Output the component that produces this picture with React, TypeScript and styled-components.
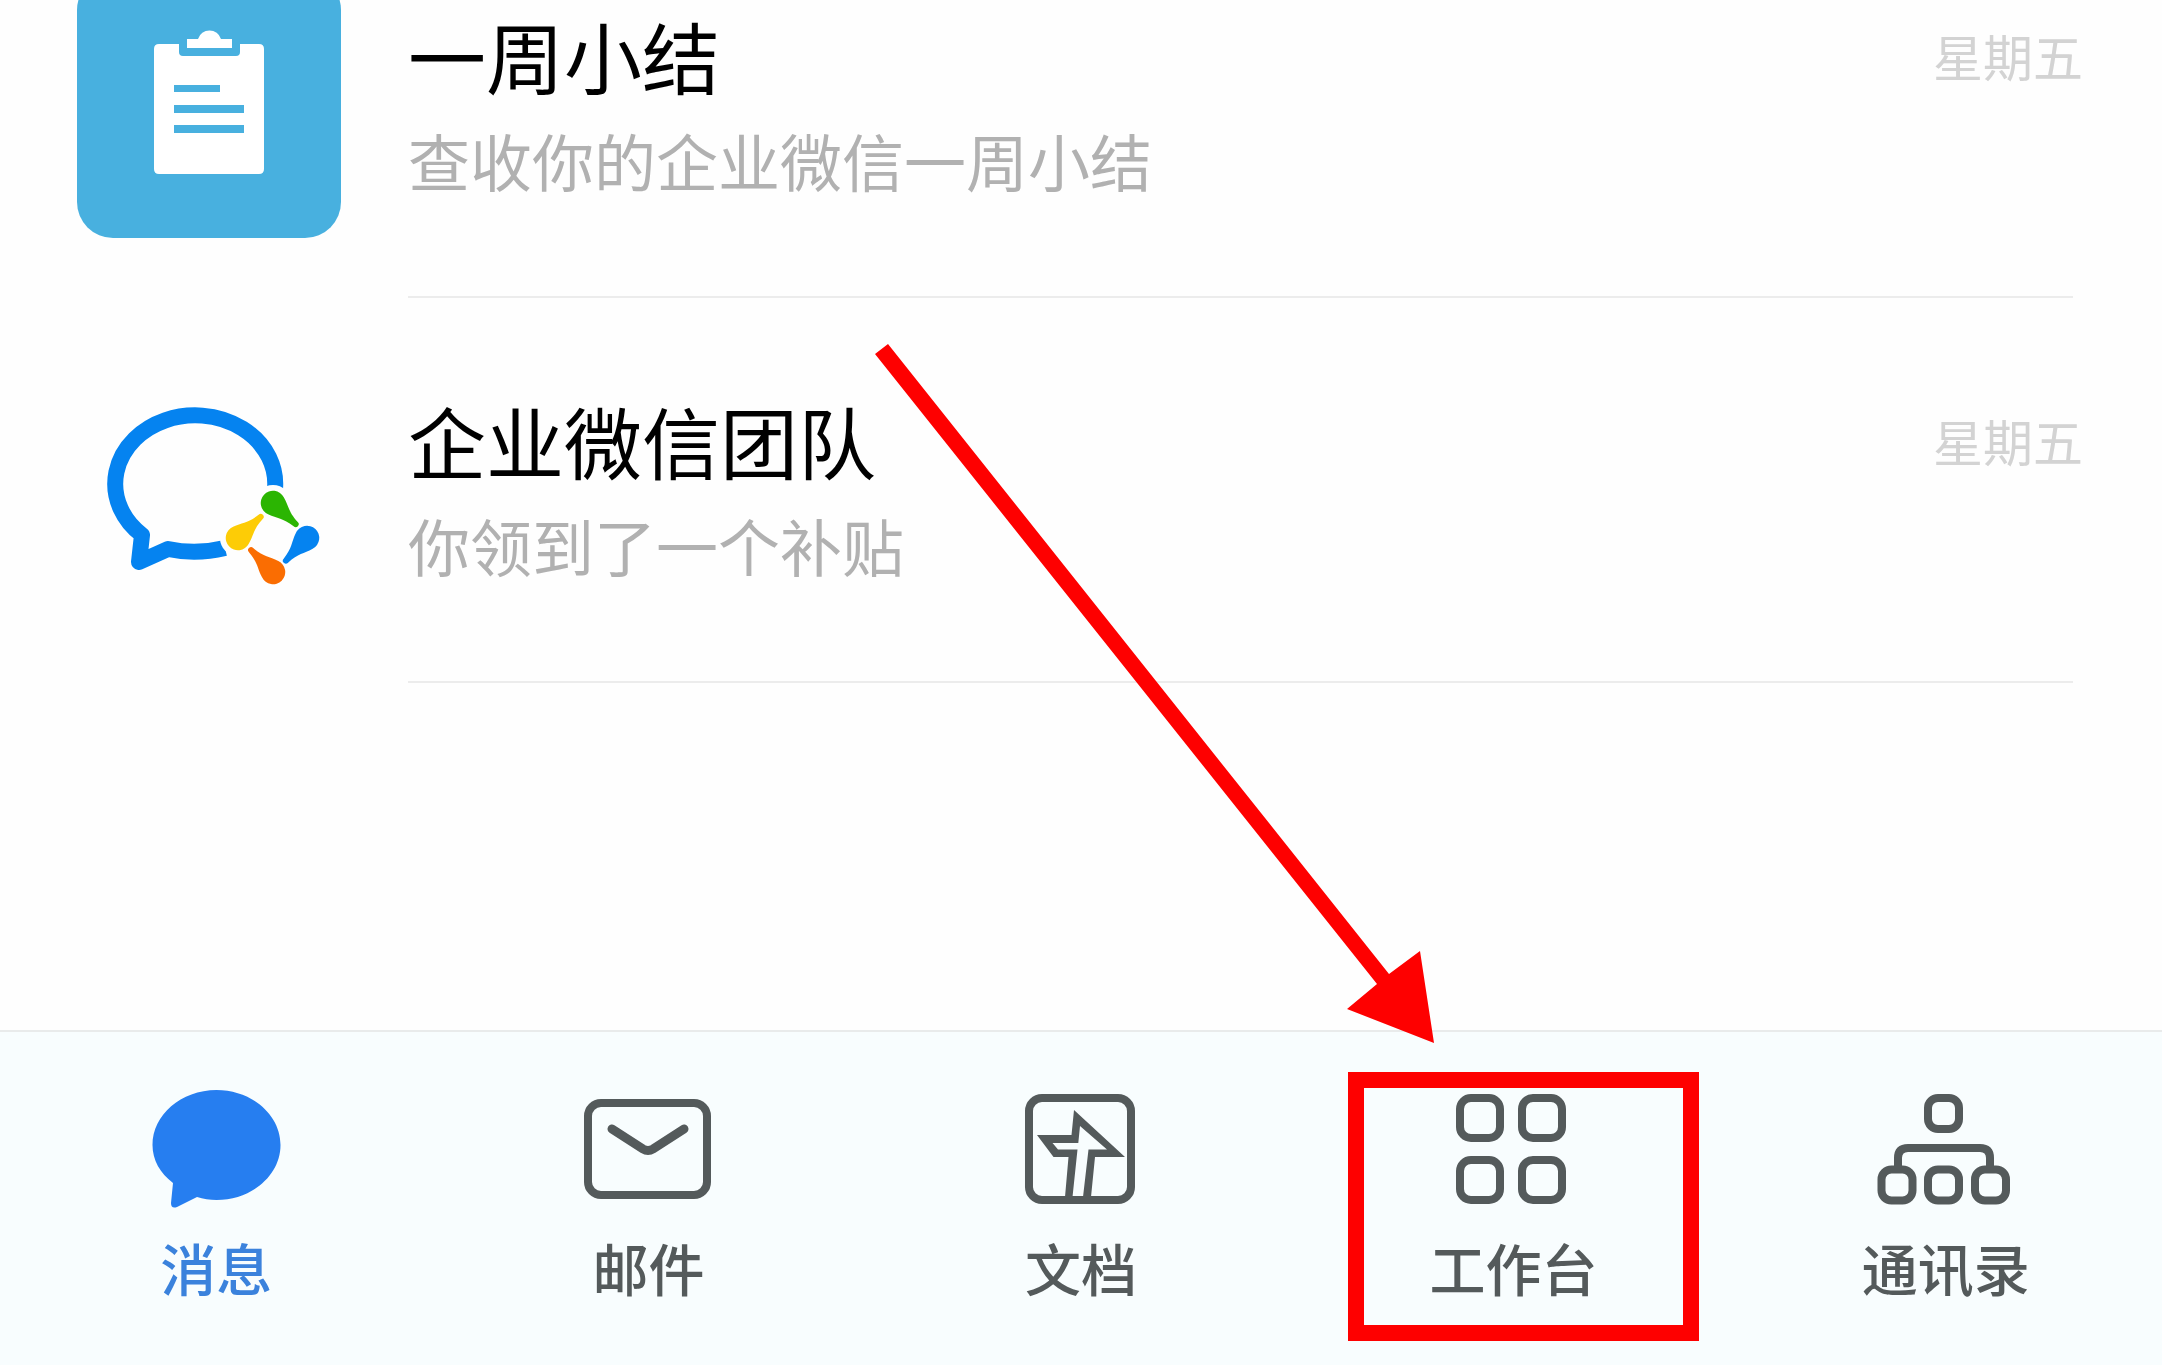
import React from "react";
import styled, { createGlobalStyle } from "styled-components";

const GlobalStyle = createGlobalStyle`
  * { box-sizing: border-box; }
  body {
    margin: 0;
    background: #fefefe;
    font-family: "Noto Sans CJK SC", "Noto Sans", sans-serif;
  }
`;

const Page = styled.div`
  position: relative;
  display: flex;
  flex-direction: column;
  min-height: 100vh;
  overflow: hidden;
`;

const Main = styled.main`
  flex: 1;
`;

/* The list is scrolled, so the first conversation is partly out of view. */
const ChatList = styled.ul`
  list-style: none;
  margin: -87px 0 0;
  padding: 0;
`;

const ChatRow = styled.li`
  display: flex;
  align-items: center;
  gap: 67px;
  height: 385px;
  padding: 0 79px 0 77px;
`;

const Avatar = styled.svg`
  flex: none;
  width: 264px;
  height: 264px;
`;

const ChatBody = styled.div`
  flex: 1;
  display: flex;
  flex-direction: column;
  align-self: stretch;
`;

const ChatContent = styled.div`
  flex: 1;
  display: flex;
  flex-direction: column;
  justify-content: center;
  padding-bottom: 6px;
`;

const ChatHead = styled.div`
  display: flex;
  align-items: center;
  justify-content: space-between;
`;

const Title = styled.h2`
  margin: 0;
  font-size: 78px;
  line-height: 116px;
  font-weight: 400;
  color: #000;
`;

const Time = styled.time`
  font-size: 50px;
  line-height: 116px;
  color: #d3d3d3;
`;

const Preview = styled.p`
  margin: 0;
  font-size: 62px;
  line-height: 94px;
  color: #b1b1b1;
`;

const Divider = styled.div`
  height: 2px;
  margin-right: 10px;
  background: #ececec;
`;

const TabBar = styled.nav`
  display: grid;
  grid-template-columns: repeat(5, 1fr);
  height: 335px;
  border-top: 2px solid #e9ebeb;
  background: #f8fdfe;
`;

const Tab = styled.button<{ $active?: boolean }>`
  position: relative;
  display: flex;
  flex-direction: column;
  align-items: center;
  gap: 20px;
  margin: 0;
  padding: 47px 0 0;
  border: 0;
  background: none;
  font-family: inherit;
  font-size: 56px;
  line-height: 56px;
  font-weight: 500;
  color: ${(p) => (p.$active ? "#3b82dc" : "#545a5b")};
`;

const TabIcon = styled.svg`
  width: 140px;
  height: 140px;
  fill: none;
  stroke: #545a5b;
  stroke-width: 8;
`;

const Highlight = styled.span`
  position: absolute;
  inset: 40px 31px 24px 51px;
  border: 16px solid #fe0000;
`;

const Arrow = styled.svg`
  position: absolute;
  left: 0;
  top: 0;
  width: 100%;
  height: 100%;
  pointer-events: none;
`;

const SummaryAvatar = () => (
  <Avatar viewBox="0 0 264 264" aria-hidden="true">
    <rect width="264" height="264" rx="36" fill="#48b0df" />
    <path
      fill="#fff"
      d="M82 70H102V78Q102 82 106 82H159Q163 82 163 78V70H182Q187 70 187 75V195Q187 200 182 200H82Q77 200 77 195V75Q77 70 82 70Z"
    />
    <path fill="#fff" d="M110 65H121A12 12 0 0 1 144 65H155V74H110Z" />
    <path fill="#48b0df" d="M97 111H143V118H97ZM97 131H167V139H97ZM97 151H167V159H97Z" />
  </Avatar>
);

const drops = [
  { x: 196, y: 144, angle: 43, color: "#2bb502" },
  { x: 230, y: 179, angle: 133, color: "#0583f0" },
  { x: 196, y: 213, angle: 225, color: "#fa6d02" },
  { x: 161, y: 179, angle: 317, color: "#fdcc06" },
];

const TeamAvatar = () => (
  <Avatar viewBox="0 0 264 264" aria-hidden="true">
    <path
      fill="none"
      stroke="#0583f0"
      strokeWidth="16"
      strokeLinejoin="round"
      d="M198 130A80 68.500 0 1 0 65 176L62 203L91 190Q119 196 148 189"
    />
    <circle cx="196" cy="144" r="18" fill="#fefefe" />
    <circle cx="161" cy="179" r="18" fill="#fefefe" />
    {drops.map((d) => (
      <path
        key={d.angle}
        fill={d.color}
        transform={`translate(${d.x} ${d.y}) rotate(${d.angle})`}
        d="M4 -11.500C14 -8.500 17 -4 31 -3A3 3 0 0 1 31 3C17 4 14 8.500 4 11.500A12.200 12.200 0 1 1 4 -11.500Z"
      />
    ))}
  </Avatar>
);

const MessageIcon = () => (
  <TabIcon viewBox="0 0 140 140" aria-hidden="true">
    <path
      fill="#267ef0"
      stroke="none"
      d="M27 104C14 94 6.500 81 6.500 66C6.500 36 35 11 70.500 11S134.500 36 134.500 66S106 121 70.500 121C64 121 57 120 51 118L31 128Q25 130 25 124Z"
    />
  </TabIcon>
);

const MailIcon = () => (
  <TabIcon viewBox="0 0 140 140" aria-hidden="true">
    <rect x="9" y="24" width="119" height="92" rx="13" />
    <path d="M33 50L64 70Q69 73 74 70L105 50" strokeWidth="9" strokeLinecap="round" />
  </TabIcon>
);

const DocIcon = () => (
  <TabIcon viewBox="0 0 140 140" aria-hidden="true">
    <rect x="18" y="19" width="102" height="102" rx="13" />
    <path
      fill="#545a5b"
      stroke="none"
      fillRule="evenodd"
      d="M63 31L114 78H84L80 118H54L57.500 78H42.500L26 56H60.500ZM69 47L67.300 64H41.500L47 70.500H66.500L61.500 118H72L77.500 70.500H96Z"
    />
  </TabIcon>
);

const WorkbenchIcon = () => (
  <TabIcon viewBox="0 0 140 140" aria-hidden="true">
    <rect x="17" y="19" width="40" height="40" rx="11" />
    <rect x="79" y="19" width="40" height="40" rx="11" />
    <rect x="17" y="81" width="40" height="40" rx="11" />
    <rect x="79" y="81" width="40" height="40" rx="11" />
  </TabIcon>
);

const ContactsIcon = () => (
  <TabIcon viewBox="0 0 140 140" aria-hidden="true">
    <rect x="52" y="19" width="31" height="31" rx="10" />
    <rect x="5.500" y="90.500" width="31" height="31" rx="10" />
    <rect x="52" y="90.500" width="31" height="31" rx="10" />
    <rect x="99" y="90.500" width="31" height="31" rx="10" />
    <path d="M22 90V79Q22 69 32 69H104Q114 69 114 79V90" />
  </TabIcon>
);

const chats = [
  { title: "一周小结", preview: "查收你的企业微信一周小结", time: "星期五", Icon: SummaryAvatar },
  { title: "企业微信团队", preview: "你领到了一个补贴", time: "星期五", Icon: TeamAvatar },
];

const tabs = [
  { label: "消息", Icon: MessageIcon, active: true },
  { label: "邮件", Icon: MailIcon },
  { label: "文档", Icon: DocIcon },
  { label: "工作台", Icon: WorkbenchIcon, highlighted: true },
  { label: "通讯录", Icon: ContactsIcon },
];

export default function App() {
  return (
    <Page>
      <GlobalStyle />
      <Main>
        <ChatList>
          {chats.map(({ title, preview, time, Icon }) => (
            <ChatRow key={title}>
              <Icon />
              <ChatBody>
                <ChatContent>
                  <ChatHead>
                    <Title>{title}</Title>
                    <Time>{time}</Time>
                  </ChatHead>
                  <Preview>{preview}</Preview>
                </ChatContent>
                <Divider />
              </ChatBody>
            </ChatRow>
          ))}
        </ChatList>
      </Main>
      <TabBar>
        {tabs.map(({ label, Icon, active, highlighted }) => (
          <Tab key={label} type="button" $active={active} aria-current={active ? "page" : undefined}>
            <Icon />
            {label}
            {highlighted && <Highlight />}
          </Tab>
        ))}
      </TabBar>
      <Arrow viewBox="0 0 2162 1365" aria-hidden="true">
        <path fill="#fe0000" d="M888 344L1389 974L1420 951L1434 1043L1347 1009L1377 984L875 354Z" />
      </Arrow>
    </Page>
  );
}
